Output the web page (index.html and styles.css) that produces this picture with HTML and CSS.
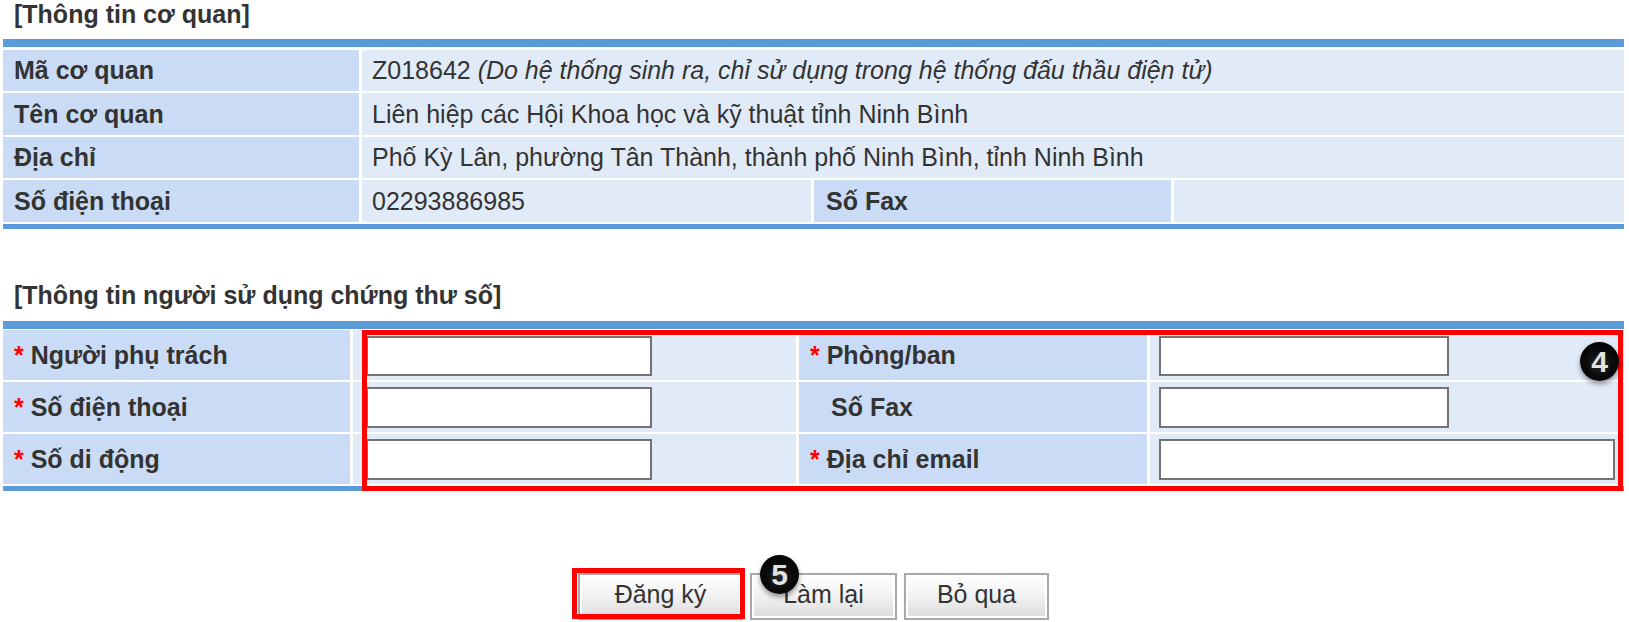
FILE: index.html
```html
<!DOCTYPE html>
<html lang="vi">
<head>
<meta charset="utf-8">
<title>Đăng ký</title>
<link rel="stylesheet" href="styles.css">
</head>
<body>
<div class="page">
  <h2 class="heading heading-org">[Thông tin cơ quan]</h2>
  <section class="panel">
    <div class="grid grid-org">
      <div class="label">Mã cơ quan</div>
      <div class="value span3">Z018642 <em>(Do hệ thống sinh ra, chỉ sử dụng trong hệ thống đấu thầu điện tử)</em></div>
      <div class="label">Tên cơ quan</div>
      <div class="value span3">Liên hiệp các Hội Khoa học và kỹ thuật tỉnh Ninh Bình</div>
      <div class="label">Địa chỉ</div>
      <div class="value span3">Phố Kỳ Lân, phường Tân Thành, thành phố Ninh Bình, tỉnh Ninh Bình</div>
      <div class="label">Số điện thoại</div>
      <div class="value">02293886985</div>
      <div class="label label-fax">Số Fax</div>
      <div class="value"></div>
    </div>
  </section>

  <h2 class="heading heading-user">[Thông tin người sử dụng chứng thư số]</h2>
  <section class="panel panel-user">
    <div class="grid grid-user">
      <div class="label"><span class="star">*</span> Người phụ trách</div>
      <div class="value field field-a field-first"><input class="input input-a" type="text"></div>
      <div class="label"><span class="star">*</span> Phòng/ban</div>
      <div class="value field field-b field-first"><input class="input input-b" type="text"></div>
      <div class="label"><span class="star">*</span> Số điện thoại</div>
      <div class="value field field-a"><input class="input input-a" type="text"></div>
      <div class="label label-plain">Số Fax</div>
      <div class="value field field-b"><input class="input input-b" type="text"></div>
      <div class="label"><span class="star">*</span> Số di động</div>
      <div class="value field field-a"><input class="input input-a" type="text"></div>
      <div class="label"><span class="star">*</span> Địa chỉ email</div>
      <div class="value field field-b"><input class="input input-long" type="text"></div>
    </div>
    <div class="mark mark-fields"><span class="badge badge-4">4</span></div>
  </section>

  <div class="actions">
    <button class="btn btn-submit" type="button">Đăng ký</button>
    <button class="btn btn-reset" type="button">Làm lại</button>
    <button class="btn btn-skip" type="button">Bỏ qua</button>
    <div class="mark mark-submit"></div>
    <span class="badge badge-5">5</span>
  </div>
</div>
</body>
</html>
```
FILE: styles.css
```css
* { box-sizing: border-box; }
html, body { margin: 0; padding: 0; background: #fff; }
body {
  font-family: "Liberation Sans", Arial, sans-serif;
  color: #333;
  overflow: hidden;
}
.page { width: 1629px; height: 622px; padding: 0 5px 0 3px; }

.heading {
  margin: 0;
  padding-left: 11px;
  height: 30px;
  line-height: 30px;
  font-size: 25px;
  font-weight: bold;
  color: #333;
}
.heading-org { height: 28px; line-height: 28px; margin-bottom: 11px; }
.heading-user { margin-top: 51px; margin-bottom: 11px; }

.panel {
  position: relative;
  border-top: 8.5px solid #5b9bd9;
  border-bottom: 5px solid #5b9bd9;
  padding: 2.5px 0 2px;
}
.panel-user {
  border-top-width: 8px;
  padding: 1px 0 2px;
}

.grid { display: grid; column-gap: 3px; }
.grid-org {
  grid-template-columns: 356px 449px 357px 450px;
  grid-auto-rows: 41.5px;
  row-gap: 2px;
}
.grid-user {
  grid-template-columns: 347px 443px 348px 474px;
  grid-auto-rows: 50px;
  row-gap: 2px;
}

.label, .value {
  display: flex;
  align-items: center;
  font-size: 25px;
  white-space: pre;
  padding-top: 1px;
}
.label {
  background: #cadcf5;
  font-weight: bold;
  padding-left: 11px;
}
.label-fax { padding-left: 12px; }
.label-plain { padding-left: 32px; }
.value {
  background: #e1ebf8;
  padding-left: 10px;
}
.span3 { grid-column: span 3; }
.star { color: #f00; }

.field { align-items: flex-start; padding-top: 5px; }
.field-a { padding-left: 13px; }
.field-b { padding-left: 9px; }
.field-first { padding-top: 6px; }

.input {
  display: block;
  height: 41px;
  border: 2px solid #737373;
  background: #fff;
  border-radius: 0;
  padding: 0;
  margin: 0;
}
.field-first .input { height: 40px; }
.input-a { width: 286px; }
.input-b { width: 290px; }
.input-long { width: 456px; }

.mark { position: absolute; border: 5px solid #f00; pointer-events: none; }
.mark-fields { top: 1px; left: 359px; right: 1px; bottom: -5px; }
.mark-submit { left: 569px; top: -5px; width: 173px; height: 51px; }

.badge {
  position: absolute;
  width: 39px;
  height: 39px;
  border-radius: 50%;
  background: radial-gradient(circle at 50% 55%, #2a2a2a 0%, #0a0a0a 45%, #000 100%);
  box-shadow: 0 3px 5px rgba(0, 0, 0, .4);
  color: #e2e2e2;
  font-size: 30px;
  font-weight: bold;
  line-height: 39px;
  text-align: center;
}
.badge-4 { top: 7px; right: -1px; }
.badge-5 { left: 757px; top: -18px; }

.actions {
  position: relative;
  margin-top: 82px;
  height: 47px;
  display: flex;
  justify-content: center;
  column-gap: 7px;
}
.btn {
  height: 47px;
  border: 2px solid #a8a8a8;
  box-shadow: inset 0 0 0 2px #fff;
  background: linear-gradient(#fff 0%, #f3f3f3 45%, #dcdcdc 100%);
  color: #333;
  font-family: inherit;
  font-size: 25px;
  padding: 0 0 3px;
}
.btn-submit { width: 165px; }
.btn-reset { width: 147px; }
.btn-skip { width: 145px; }
```
